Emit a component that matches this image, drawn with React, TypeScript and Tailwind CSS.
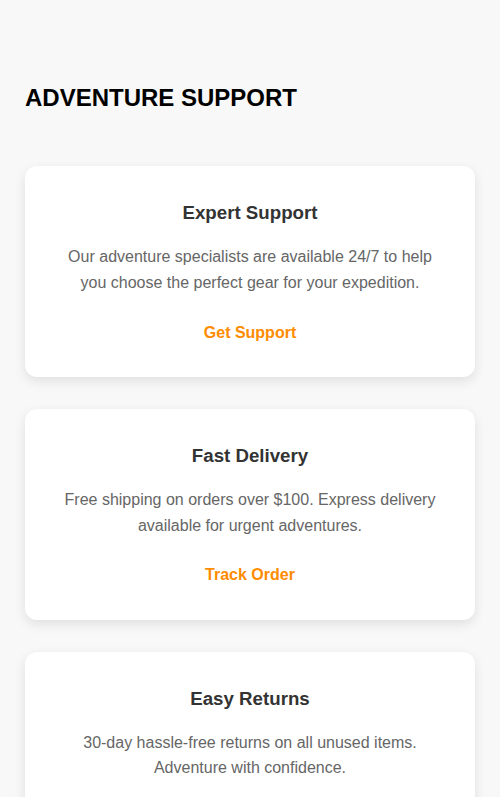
export default function App() {
  const cards = [
    {
      title: "Expert Support",
      body: "Our adventure specialists are available 24/7 to help you choose the perfect gear for your expedition.",
      link: "Get Support",
    },
    {
      title: "Fast Delivery",
      body: "Free shipping on orders over $100. Express delivery available for urgent adventures.",
      link: "Track Order",
    },
    {
      title: "Easy Returns",
      body: "30-day hassle-free returns on all unused items. Adventure with confidence.",
      link: "Start Return",
    },
  ];
  return (
    <div
      className="min-h-screen bg-[#f8f8f8] px-[25px] pt-[79px] pb-[40px] leading-[1.6]"
      style={{ fontFamily: '"Liberation Sans", Arial, sans-serif' }}
    >
      <h2 className="text-[24px] font-bold text-black mb-[49px] leading-[1.6]">ADVENTURE SUPPORT</h2>
      <div className="flex flex-col gap-[32px]">
        {cards.map((c) => (
          <div
            key={c.title}
            className="bg-white rounded-[12px] p-[32px] text-center shadow-[0_4px_12px_rgba(0,0,0,0.1)]"
          >
            <h3 className="text-[18.7px] font-bold text-[#333] mb-[16px] leading-[1.6]">{c.title}</h3>
            <p className="text-[16px] text-[#666] mb-[24px] leading-[1.6]">{c.body}</p>
            <a href="#" className="text-[16px] font-bold text-[#ff8c00] leading-[1.6]">
              {c.link}
            </a>
          </div>
        ))}
      </div>
    </div>
  );
}
